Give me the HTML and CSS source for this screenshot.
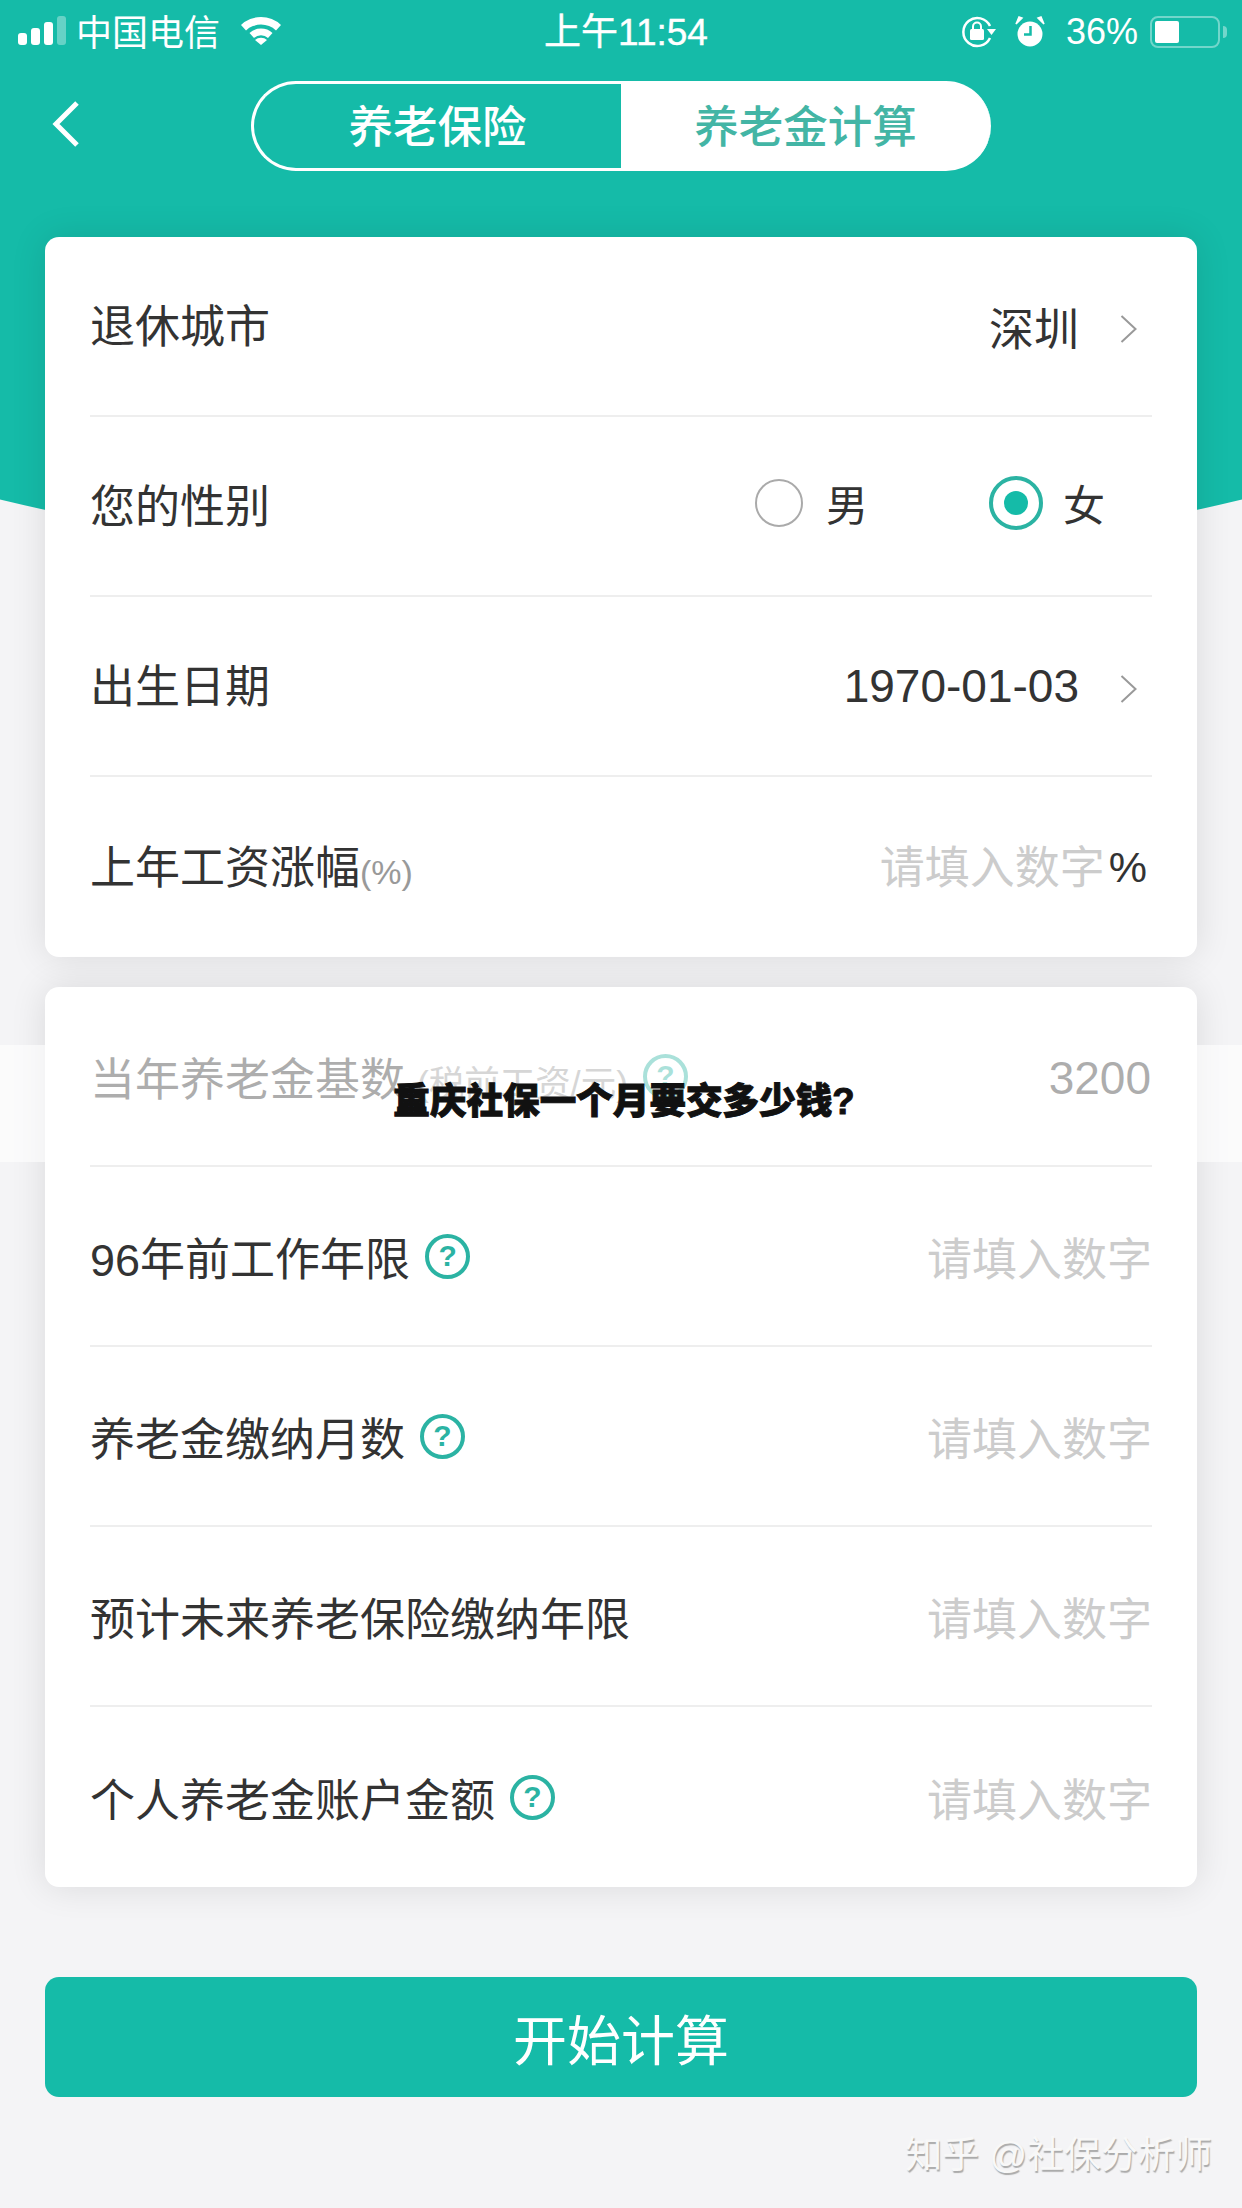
FILE: index.html
```html
<!DOCTYPE html>
<html>
<head>
	<title>养老金计算</title>
	<link rel="stylesheet" href="styles.css">
</head>
<body>
	<div class="page">
		<div class="backdrop"></div>

		<div class="status-bar">
			<div class="status-left">
				<div class="signal">
					<span class="bar bar-1"></span>
					<span class="bar bar-2"></span>
					<span class="bar bar-3"></span>
					<span class="bar bar-4"></span>
				</div>
				<span class="carrier">中国电信</span>
				<svg class="wifi" width="42" height="30" viewBox="0 0 42 30">
					<path d="M1 10 A29 29 0 0 1 41 10 L36 15.5 A22 22 0 0 0 6 15.5 Z" fill="#fff"/>
					<path d="M9.5 19 A17 17 0 0 1 32.5 19 L28 24 A10 10 0 0 0 14 24 Z" fill="#fff" transform="translate(0 -1)"/>
					<path d="M15 25 A9 9 0 0 1 27 25 L21 30 Z" fill="#fff"/>
				</svg>
			</div>
			<div class="status-time">上午11:54</div>
			<div class="status-right">
				<svg width="36" height="32" viewBox="0 0 36 32">
					<path d="M29 22 A14 14 0 1 1 29 10" fill="none" stroke="#fff" stroke-width="2.5"/>
					<path d="M26 13 L35 13 L30.500 19 Z" fill="#fff"/>
					<rect x="9" y="13" width="14" height="11" rx="1.500" fill="#fff"/>
					<path d="M12 13 V10.500 A4 4 0 0 1 20 10.500 V13" fill="none" stroke="#fff" stroke-width="2"/>
				</svg>
				<svg class="alarm" width="30" height="32" viewBox="0 0 30 32">
					<circle cx="15" cy="18" r="12.500" fill="#fff"/>
					<path d="M1 8 L7 2 L4 1 Z M29 8 L23 2 L26 1 Z" fill="#fff" stroke="#fff" stroke-width="1.500"/>
					<path d="M15.500 10 V18.500 H9" fill="none" stroke="#15bba8" stroke-width="2.500"/>
				</svg>
				<span class="battery-text">36%</span>
				<div class="battery"><div class="battery-fill"></div></div>
				<div class="battery-nub"></div>
			</div>
		</div>

		<div class="nav">
			<svg class="back" width="28" height="46" viewBox="0 0 28 46">
				<path d="M25 2 L4 23 L25 44" fill="none" stroke="#fff" stroke-width="5"/>
			</svg>
			<div class="tabs">
				<div class="tab">养老保险</div>
				<div class="tab tab-active">养老金计算</div>
			</div>
		</div>

		<div class="card card-first">
			<div class="row">
				<span class="label">退休城市</span>
				<span class="value">深圳</span>
				<svg class="chevron" width="18" height="28" viewBox="0 0 18 28"><path d="M1.500 1 L15.500 14 L1.500 27" fill="none" stroke="#999" stroke-width="2"/></svg>
			</div>
			<div class="row">
				<span class="label">您的性别</span>
				<div class="gender">
					<span class="radio"></span>
					<span class="gender-text">男</span>
					<span class="radio radio-on"></span>
					<span class="gender-text gender-text-on">女</span>
				</div>
			</div>
			<div class="row">
				<span class="label">出生日期</span>
				<span class="value value-date">1970-01-03</span>
				<svg class="chevron" width="18" height="28" viewBox="0 0 18 28"><path d="M1.500 1 L15.500 14 L1.500 27" fill="none" stroke="#999" stroke-width="2"/></svg>
			</div>
			<div class="row row-rate">
				<span class="label">上年工资涨幅<small class="unit">(%)</small></span>
				<span class="value placeholder">请填入数字</span>
				<span class="value percent">%</span>
			</div>
		</div>

		<div class="card card-second">
			<div class="row">
				<span class="label">当年养老金基数<small class="note">(税前工资/元)</small></span>
				<span class="help">?</span>
				<span class="value value-base">3200</span>
			</div>
			<div class="row">
				<span class="label">96年前工作年限</span>
				<span class="help">?</span>
				<span class="value placeholder">请填入数字</span>
			</div>
			<div class="row">
				<span class="label">养老金缴纳月数</span>
				<span class="help">?</span>
				<span class="value placeholder">请填入数字</span>
			</div>
			<div class="row">
				<span class="label">预计未来养老保险缴纳年限</span>
				<span class="value placeholder">请填入数字</span>
			</div>
			<div class="row">
				<span class="label">个人养老金账户金额</span>
				<span class="help">?</span>
				<span class="value placeholder">请填入数字</span>
			</div>
		</div>

		<button class="start">开始计算</button>

		<div class="banner">重庆社保一个月要交多少钱?</div>
		<div class="watermark">知乎 @社保分析师</div>
	</div>
</body>
</html>
```
FILE: styles.css
```css
body {
	margin: 0;
	padding: 0;
	background-color: #f4f4f6;
	font-family: "Liberation Sans", "Noto Sans CJK SC", sans-serif;
	color: #333;
}

.page {
	position: relative;
	width: 1242px;
	height: 2208px;
	overflow: hidden;
}

.backdrop {
	position: absolute;
	top: 0;
	left: 0;
	width: 100%;
	height: 600px;
	background-color: #15bba8;
	clip-path: circle(2660px at 621px -2087px);
}

.status-bar {
	position: relative;
	display: grid;
	grid-template-columns: 1fr auto 1fr;
	align-items: center;
	height: 64px;
	color: white;
}

.status-left {
	display: flex;
	align-items: center;
	padding-left: 18px;
	padding-bottom: 4px;
}

.signal {
	display: flex;
	align-items: flex-end;
	gap: 4px;
	height: 29px;
}

.bar {
	width: 9px;
	border-radius: 3px;
	background-color: white;
}

.bar-1 { height: 12px; }
.bar-2 { height: 17px; }
.bar-3 { height: 23px; }
.bar-4 { height: 29px; opacity: 0.35; }

.carrier {
	font-size: 36px;
	margin-left: 10px;
}

.wifi {
	margin-left: 20px;
}

.status-time {
	font-size: 37px;
	padding-left: 10px;
	padding-bottom: 6px;
	-webkit-text-stroke: 0.4px white;
}

.status-right {
	display: flex;
	align-items: center;
	justify-content: flex-end;
	padding-right: 15px;
}

.alarm {
	margin-left: 18px;
}

.battery-text {
	font-size: 36px;
	margin-left: 21px;
}

.battery {
	box-sizing: border-box;
	width: 70px;
	height: 32px;
	margin-left: 12px;
	padding: 3px;
	border: 2px solid rgba(255, 255, 255, 0.4);
	border-radius: 8px;
}

.battery-fill {
	width: 24px;
	height: 100%;
	border-radius: 2px;
	background-color: white;
}

.battery-nub {
	width: 4px;
	height: 12px;
	margin-left: 3px;
	border-radius: 0 4px 4px 0;
	background-color: rgba(255, 255, 255, 0.4);
}

.nav {
	position: relative;
	display: flex;
	align-items: center;
	height: 90px;
	margin-top: 17px;
	margin-bottom: 66px;
	padding-left: 52px;
}

.back {
	margin-right: 171px;
	margin-bottom: 5px;
}

.tabs {
	display: flex;
	width: 740px;
	height: 90px;
}

.tab {
	box-sizing: border-box;
	display: flex;
	align-items: center;
	justify-content: center;
	width: 370px;
	padding-bottom: 5px;
	font-size: 44.5px;
	font-weight: 500;
	color: white;
	border: 3px solid white;
	border-right: none;
	border-radius: 45px 0 0 45px;
}

.tab-active {
	padding-right: 4px;
	color: #43b5a5;
	background-color: white;
	border-radius: 0 45px 45px 0;
}

.card {
	position: relative;
	margin: 0 45px;
	border-radius: 14px;
	background-color: white;
	box-shadow: 0 0 36px rgba(0, 0, 0, 0.11);
}

.card-second {
	margin-top: 30px;
}

.row {
	box-sizing: border-box;
	display: flex;
	align-items: center;
	height: 180px;
	margin: 0 45px;
	border-bottom: 2px solid #eee;
}

.row:last-child {
	border-bottom: none;
}

.label {
	font-size: 45px;
	margin-right: auto;
}

.card-first .label {
	padding-bottom: 6px;
}

.row .help + .value {
	margin-left: auto;
}

.row .help {
	margin-right: auto;
}

.row:has(.help) .label {
	margin-right: 15px;
}

.value {
	font-size: 45px;
}

.value-date {
	font-size: 46px;
}

.value-base {
	padding-top: 4px;
	padding-right: 1px;
	font-size: 46px;
}

.placeholder {
	color: #ccc;
}

.row-rate {
	padding-right: 5px;
}

.row-rate .placeholder {
	padding-bottom: 5px;
}

.percent {
	margin-left: 4px;
	font-size: 43px;
}

.unit {
	font-size: 34px;
	color: #999;
}

.note {
	margin-left: 12px;
	font-size: 35.5px;
	color: #999;
}

.chevron {
	margin-top: 6px;
	margin-left: 41px;
	margin-right: 14px;
}

.gender {
	display: flex;
	align-items: center;
	padding-right: 47px;
	padding-bottom: 7px;
}

.radio {
	box-sizing: border-box;
	width: 48px;
	height: 48px;
	border: 2px solid #aaa;
	border-radius: 50%;
}

.radio-on {
	width: 54px;
	height: 54px;
	margin-left: 121px;
	border: 4px solid #2bb3a3;
	background-color: #15bba8;
	background-clip: content-box;
	padding: 11px;
}

.gender-text {
	font-size: 42px;
	margin-left: 23px;
}

.gender-text-on {
	margin-left: 20px;
}

.help {
	box-sizing: border-box;
	display: flex;
	align-items: center;
	justify-content: center;
	width: 45px;
	height: 45px;
	border: 4px solid #2bb3a3;
	border-radius: 50%;
	font-size: 30px;
	font-weight: bold;
	color: #2bb3a3;
}

.start {
	display: block;
	width: 1152px;
	height: 120px;
	margin: 90px 45px 0;
	border: none;
	border-radius: 14px;
	background-color: #15bba8;
	color: white;
	font-family: "Liberation Sans", "Noto Sans CJK SC", sans-serif;
	font-size: 54px;
}

.banner {
	position: absolute;
	top: 1045px;
	left: 0;
	width: 100%;
	height: 117px;
	display: flex;
	align-items: center;
	justify-content: center;
	padding-left: 6px;
	padding-bottom: 10px;
	box-sizing: border-box;
	background-color: rgba(255, 255, 255, 0.6);
	font-size: 36.6px;
	font-weight: 900;
	color: #111;
	-webkit-text-stroke: 1px #111;
}

.watermark {
	position: absolute;
	top: 2125px;
	right: 30px;
	font-size: 37px;
	color: #f8f8f8;
	text-shadow: 1px 2px 1px #aaa;
}
```
